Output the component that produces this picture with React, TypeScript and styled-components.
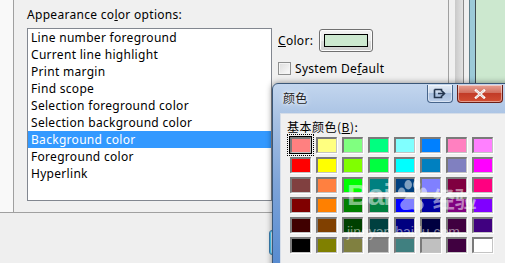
import React from 'react'
import styled, { createGlobalStyle } from 'styled-components'

const GlobalStyle = createGlobalStyle`
  html, body {
    margin: 0;
    padding: 0;
    background: #efefef;
  }
  * {
    box-sizing: border-box;
  }
`

const OPTIONS = [
  'Line number foreground',
  'Current line highlight',
  'Print margin',
  'Find scope',
  'Selection foreground color',
  'Selection background color',
  'Background color',
  'Foreground color',
  'Hyperlink'
]

const SELECTED_OPTION = 6

const BASIC_COLORS = [
  ['#ff8080', '#ffff80', '#80ff80', '#00ff80', '#80ffff', '#0080ff', '#ff80c0', '#ff80ff'],
  ['#ff0000', '#ffff00', '#80ff00', '#00ff40', '#00ffff', '#0080c0', '#8080c0', '#ff00ff'],
  ['#804040', '#ff8040', '#00ff00', '#008080', '#004080', '#8080ff', '#800040', '#ff0080'],
  ['#800000', '#ff8000', '#008000', '#008040', '#0000ff', '#0000a0', '#800080', '#8000ff'],
  ['#400000', '#804000', '#004000', '#004040', '#000080', '#000040', '#400040', '#400080'],
  ['#000000', '#808000', '#808040', '#808080', '#408080', '#c0c0c0', '#400040', '#ffffff']
]

const Screen = styled.div`
  position: relative;
  width: 505px;
  height: 263px;
  overflow: hidden;
  font-family: 'Noto Sans', 'Noto Sans CJK SC', sans-serif;
  font-size: 12px;
  letter-spacing: 0.3px;
  color: #000;
  background: #efefef;
`

const TopArea = styled.div`
  display: flex;
  height: 213px;
  background: #f0f0f0;
  border-bottom: 1px solid #a0a0a0;
`

const SideStrip = styled.div`
  width: 14px;
  background: #f9f9f9;
  border-right: 1px solid #a0a0a0;
`

const OptionsPanel = styled.div`
  width: 434px;
  padding: 7px 0 0 13px;
  display: flex;
  flex-direction: column;
`

const Heading = styled.div`
  height: 15px;
  line-height: 15px;
  margin-bottom: 6px;
`

const PanelRow = styled.div`
  display: flex;
  align-items: flex-start;
`

const ListBox = styled.div`
  width: 245px;
  height: 173px;
  background: #fff;
  border: 1px solid #828790;
  display: flex;
  flex-direction: column;
`

const ListItem = styled.div<{ $selected?: boolean }>`
  height: 17px;
  line-height: 17px;
  padding-left: 3px;
  white-space: nowrap;
  color: ${p => (p.$selected ? '#fff' : '#000')};
  background: ${p => (p.$selected ? '#3399ff' : 'transparent')};
`

const Controls = styled.div`
  margin-left: 6px;
  display: flex;
  flex-direction: column;
`

const ColorRow = styled.div`
  display: flex;
  align-items: center;
  height: 23px;
  margin-top: 1px;
`

const ColorLabel = styled.span`
  width: 41px;
`

const ColorButton = styled.div`
  width: 54px;
  height: 23px;
  padding: 4px 4px;
  border: 1px solid #707070;
  border-radius: 3px;
  background: linear-gradient(#f2f2f2, #ebebeb 50%, #dddddd 51%, #cfcfcf);
  box-shadow: inset 0 0 0 1px #fcfcfc;
`

const ColorSwatch = styled.div<{ $color: string }>`
  width: 100%;
  height: 100%;
  border: 1px solid #000;
  background: ${p => p.$color};
`

const CheckRow = styled.label`
  display: flex;
  align-items: center;
  gap: 4px;
  margin-top: 9px;
  height: 15px;
`

const CheckBox = styled.span`
  width: 13px;
  height: 13px;
  border: 1px solid #8e8f8f;
  background: linear-gradient(135deg, #dcdcdc, #fbfbfb);
  box-shadow: inset 0 0 0 1px #f4f4f4;
`

const RightEdge = styled.div`
  flex: 1;
  display: flex;
`

const Strip = styled.div<{ $w?: number; $bg: string }>`
  width: ${p => (p.$w ? `${p.$w}px` : 'auto')};
  flex: ${p => (p.$w ? 'none' : '1')};
  background: ${p => p.$bg};
`

const BottomBar = styled.div`
  height: 50px;
  display: flex;
  align-items: flex-start;
  padding: 17px 0 0 269px;
`

const OkButton = styled.div`
  width: 75px;
  height: 25px;
  border: 1px solid #3c7fb1;
  border-radius: 3px;
  background: linear-gradient(#eaf6fd, #bee6fd);
  box-shadow: inset 0 0 0 1px #48d1ff;
`

/* colour picker window lying over the preferences page */
const Dialog = styled.div`
  position: absolute;
  left: 272px;
  top: 83px;
  width: 245px;
  height: 200px;
  border: 1px solid #3a5778;
  border-radius: 6px 6px 0 0;
  background: linear-gradient(180deg, #c3d6ee 0%, #a7c1e3 18%, #7ea4d8 50%, #4f86cf 100%);
  box-shadow: 0 0 6px rgba(0, 0, 0, 0.45);
  display: flex;
  flex-direction: column;
`

const TitleBar = styled.div`
  height: 29px;
  display: flex;
  align-items: flex-start;
  padding: 1px 13px 0 10px;
`

const TitleText = styled.div`
  flex: 1;
  font-family: 'Noto Sans CJK SC', sans-serif;
  font-size: 12px;
  line-height: 26px;
  color: #1a1a1a;
  text-shadow: 0 0 6px #fff, 0 0 3px #fff;
`

const CaptionButton = styled.div<{ $close?: boolean }>`
  width: ${p => (p.$close ? 46 : 26)}px;
  height: 18px;
  margin-left: ${p => (p.$close ? 4 : 0)}px;
  border: 1px solid ${p => (p.$close ? '#6b1d16' : '#47658b')};
  border-top: none;
  border-radius: 0 0 4px 4px;
  display: flex;
  align-items: center;
  justify-content: center;
  background: ${p =>
    p.$close
      ? 'linear-gradient(#e8a093, #d2705f 45%, #c23b27 50%, #d24e33 100%)'
      : 'linear-gradient(#e4ecf6, #c9d8ec 45%, #a9c0df 50%, #bccfea 100%)'};
  box-shadow: inset 0 0 0 1px rgba(255, 255, 255, 0.45);
`

const ClientArea = styled.div`
  flex: 1;
  margin: 0 7px;
  background: #f0f0f0;
  border: 1px solid #d5dde8;
  padding: 4px 0 0 6px;
`

const GroupLabel = styled.div`
  font-family: 'Noto Sans CJK SC', sans-serif;
  height: 17px;
  line-height: 17px;
  letter-spacing: 0.5px;
`

const SwatchGrid = styled.div`
  display: grid;
  grid-template-columns: repeat(8, 21px);
  grid-auto-rows: 16px;
  column-gap: 5px;
  row-gap: 4px;
  margin: 2px 0 0 3px;
`

const BasicSwatch = styled.div<{ $color: string; $current?: boolean }>`
  background: ${p => p.$color};
  border-top: 2px solid #7a7a7a;
  border-left: 2px solid #7a7a7a;
  border-right: 1px solid #c4c4c4;
  border-bottom: 1px solid #c4c4c4;
  box-shadow: ${p => (p.$current ? '0 0 0 1px #000' : '1px 1px 0 #ffffff')};
  outline: ${p => (p.$current ? '1px dotted #000' : 'none')};
  outline-offset: 2px;
`

const Watermark = styled.div`
  position: absolute;
  left: 347px;
  top: 178px;
  width: 160px;
  color: rgba(255, 255, 255, 0.5);
  letter-spacing: 0;
  pointer-events: none;
  display: flex;
  flex-direction: column;
`

const MarkRow = styled.div`
  display: flex;
  align-items: flex-end;
  gap: 5px;
`

const MarkBig = styled.span`
  font-family: 'Liberation Sans', sans-serif;
  font-weight: bold;
  font-size: 30px;
  line-height: 34px;
  letter-spacing: -1px;
`

const MarkCjk = styled.span`
  font-family: 'Noto Sans CJK SC', sans-serif;
  font-size: 22px;
  line-height: 30px;
  font-weight: bold;
`

const MarkUrl = styled.span`
  margin-top: 12px;
  font-family: 'Liberation Sans', sans-serif;
  font-size: 14px;
  line-height: 16px;
`

const BaiduPaw = () => (
  <svg width="32" height="32" viewBox="0 0 34 34" fill="rgba(255,255,255,0.5)">
    <ellipse cx="6" cy="13" rx="4" ry="5" />
    <ellipse cx="13" cy="5" rx="4" ry="5" />
    <ellipse cx="22" cy="5" rx="4" ry="5" />
    <ellipse cx="29" cy="13" rx="4" ry="5" />
    <path d="M17 14c-5 0-7 6-11 9-3 3-1 9 4 9 3 0 5-1 7-1s4 1 7 1c5 0 7-6 4-9-4-3-6-9-11-9z" />
  </svg>
)

const ExportIcon = () => (
  <svg width="14" height="11" viewBox="0 0 14 11">
    <path d="M1.5 1.5h7v2M8.5 7.5v2h-7v-8" stroke="#24364f" strokeWidth="1.6" fill="none" />
    <path d="M5 5.5h6M9 3l2.5 2.5L9 8" stroke="#24364f" strokeWidth="1.6" fill="none" />
  </svg>
)

const CloseIcon = () => (
  <svg width="12" height="10" viewBox="0 0 12 10">
    <path d="M2 1.5l8 7M10 1.5l-8 7" stroke="#fff" strokeWidth="2.4" strokeLinecap="square" />
    <path d="M2 1.5l8 7M10 1.5l-8 7" stroke="#5a1a12" strokeWidth="0.6" opacity="0.4" />
  </svg>
)

export default function App() {
  return (
    <Screen>
      <GlobalStyle />
      <TopArea>
        <SideStrip />
        <OptionsPanel>
          <Heading>
            Appearance co<u>l</u>or options:
          </Heading>
          <PanelRow>
            <ListBox>
              {OPTIONS.map((o, i) => (
                <ListItem key={o} $selected={i === SELECTED_OPTION}>
                  {o}
                </ListItem>
              ))}
            </ListBox>
            <Controls>
              <ColorRow>
                <ColorLabel>
                  <u>C</u>olor:
                </ColorLabel>
                <ColorButton>
                  <ColorSwatch $color="#cce8cf" />
                </ColorButton>
              </ColorRow>
              <CheckRow>
                <CheckBox />
                <span>
                  System De<u>f</u>ault
                </span>
              </CheckRow>
            </Controls>
          </PanelRow>
        </OptionsPanel>
        <RightEdge>
          <Strip $w={1} $bg="#a0a0a0" />
          <Strip $w={6} $bg="#f0f0f0" />
          <Strip $w={8} $bg="linear-gradient(90deg, #c9c9c9, #e2e2e2)" />
          <Strip $w={1} $bg="#8a8a8a" />
          <Strip $w={5} $bg="#f0f0f0" />
          <Strip $w={1} $bg="#5f7f8a" />
          <Strip $w={5} $bg="#9ccad8" />
          <Strip $w={1} $bg="#3f4a4f" />
          <Strip $bg="#cce8cf" />
        </RightEdge>
      </TopArea>
      <BottomBar>
        <OkButton />
      </BottomBar>

      <Dialog>
        <TitleBar>
          <TitleText>颜色</TitleText>
          <CaptionButton>
            <ExportIcon />
          </CaptionButton>
          <CaptionButton $close>
            <CloseIcon />
          </CaptionButton>
        </TitleBar>
        <ClientArea>
          <GroupLabel>
            基本颜色(<u>B</u>):
          </GroupLabel>
          <SwatchGrid>
            {BASIC_COLORS.flatMap((row, r) =>
              row.map((c, i) => <BasicSwatch key={`${r}-${i}`} $color={c} $current={r === 0 && i === 0} />)
            )}
          </SwatchGrid>
        </ClientArea>
      </Dialog>

      <Watermark>
        <MarkRow>
          <MarkBig>Bai</MarkBig>
          <BaiduPaw />
          <MarkCjk>经验</MarkCjk>
        </MarkRow>
        <MarkUrl>jingyan.baidu.com</MarkUrl>
      </Watermark>
    </Screen>
  )
}
